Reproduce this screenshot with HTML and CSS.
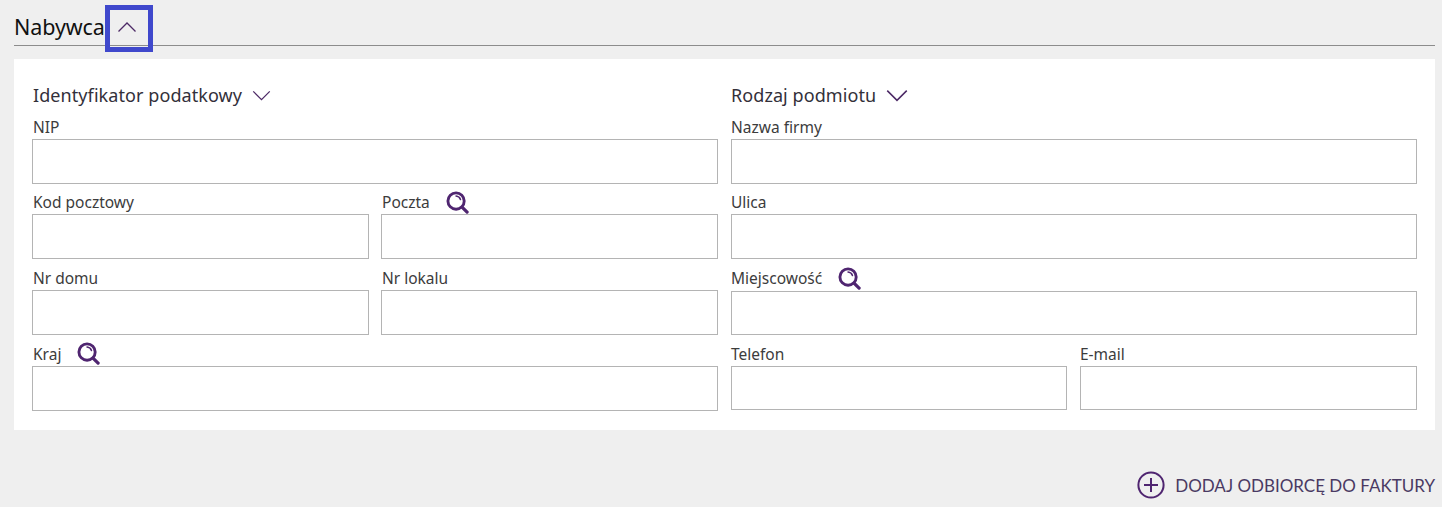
FILE: index.html
```html
<!DOCTYPE html>
<html lang="pl">
<head>
<meta charset="utf-8">
<title>Nabywca</title>
<link rel="stylesheet" href="styles.css">
</head>
<body>
<svg class="defs" width="0" height="0" aria-hidden="true">
  <symbol id="lens" viewBox="0 0 24 24">
    <circle cx="10.5" cy="10.5" r="8.5" fill="none" stroke="currentColor" stroke-width="3"/>
    <path d="M17 17l5 5" fill="none" stroke="currentColor" stroke-width="3.4" stroke-linecap="round"/>
    <path d="M10.5 5.2c2.2.2 3.9 1.6 4.6 3.6" fill="none" stroke="currentColor" stroke-width="1.6" stroke-linecap="round"/>
  </symbol>
  <symbol id="chev" viewBox="0 0 20 12">
    <path d="M1 1.5l9 9 9-9" fill="none" stroke="currentColor" stroke-width="1.4"/>
  </symbol>
</svg>
<main class="page">
  <header class="section-head">
    <h1 class="section-title">Nabywca</h1>
    <button class="toggle" type="button" aria-label="Zwiń">
      <svg class="toggle-icon" viewBox="0 0 20 12"><path d="M1.5 10.5l8.5-8.5 8.5 8.5" fill="none" stroke="currentColor" stroke-width="1.3"/></svg>
    </button>
  </header>
  <section class="card">
    <div class="column column-left">
      <div class="column-head"><span>Identyfikator podatkowy</span><svg class="chev"><use href="#chev"/></svg></div>
      <div class="fields fields-left">
        <div class="field span2"><div class="label">NIP</div><input class="input" type="text"></div>
        <div class="field"><div class="label">Kod pocztowy</div><input class="input" type="text"></div>
        <div class="field"><div class="label">Poczta<svg class="lens"><use href="#lens"/></svg></div><input class="input" type="text"></div>
        <div class="field"><div class="label">Nr domu</div><input class="input" type="text"></div>
        <div class="field"><div class="label">Nr lokalu</div><input class="input" type="text"></div>
        <div class="field span2"><div class="label">Kraj<svg class="lens"><use href="#lens"/></svg></div><input class="input" type="text"></div>
      </div>
    </div>
    <div class="column">
      <div class="column-head"><span>Rodzaj podmiotu</span><svg class="chev chev-wide"><use href="#chev"/></svg></div>
      <div class="fields fields-right">
        <div class="field span2"><div class="label">Nazwa firmy</div><input class="input" type="text"></div>
        <div class="field span2"><div class="label">Ulica</div><input class="input" type="text"></div>
        <div class="field span2 field-tall"><div class="label">Miejscowość<svg class="lens"><use href="#lens"/></svg></div><input class="input input-short" type="text"></div>
        <div class="field"><div class="label">Telefon</div><input class="input input-short" type="text"></div>
        <div class="field"><div class="label">E-mail</div><input class="input input-short" type="text"></div>
      </div>
    </div>
  </section>
  <footer class="actions">
    <a class="add-link" href="#">
      <svg class="add-icon" viewBox="0 0 28 28"><circle cx="14" cy="14" r="12.6" fill="none" stroke="currentColor" stroke-width="2"/><path d="M14 7v14M7 14h14" fill="none" stroke="currentColor" stroke-width="2"/></svg>
      <span>DODAJ ODBIORCĘ DO FAKTURY</span>
    </a>
  </footer>
</main>
</body>
</html>
```
FILE: styles.css
```css
* { box-sizing: border-box; }
html, body { margin: 0; height: 507px; overflow: hidden; }
body { background: #efefef; color: #3a3a3a; font-family: "Noto Sans", "Open Sans", sans-serif; }
.defs { position: absolute; }
.page { padding: 0 7px 0 14px; }
.section-head { display: flex; align-items: flex-end; height: 46px; border-bottom: 1px solid #8c8c8c; }
.section-title { margin: 0 0 4px; font-size: 21.5px; line-height: 28px; font-weight: 400; color: #111; letter-spacing: -.1px; }
.toggle { display: flex; align-items: center; justify-content: center; width: 48px; height: 47px; margin: 0 0 -7px 0; padding: 0; border: 5px solid #3f48cc; background: transparent; color: #4d2a66; }
.toggle-icon { width: 20px; height: 12px; margin: -4px 4px 0 0; }
.card { display: grid; grid-template-columns: 686px 686px; column-gap: 13px; height: 371px; margin-top: 13px; padding: 18px 18px 0; background: #fff; }
.column-head { display: flex; align-items: center; height: 38.9px; padding-bottom: 2px; font-size: 18px; letter-spacing: .08px; color: #33303a; }
.column-left .column-head, .column-left .label { padding-left: 1px; }
.chev { width: 19px; height: 11px; margin-left: 10px; color: #4d2a66; }
.chev-wide { width: 22px; height: 13px; }
.fields { display: grid; row-gap: 8px; }
.fields-left { grid-template-columns: 337px 337px; column-gap: 12px; }
.fields-right { grid-template-columns: 336px 337px; column-gap: 13px; }
.span2 { grid-column: span 2; }
.label { display: flex; align-items: center; height: 22.7px; padding-bottom: 1px; font-size: 15.5px; color: #3c3c3c; }
.field-tall .label { height: 24px; padding-bottom: 2px; }
.lens { width: 23px; height: 23px; margin-left: 16px; color: #4f2570; }
.input { display: block; width: 100%; height: 45px; border: 1px solid #b4b4b4; border-radius: 0; background: #fff; }
.input-short { height: 44px; }
.actions { display: flex; justify-content: flex-end; margin-top: 41px; }
.add-link { display: flex; align-items: center; gap: 10px; color: #4a3a63; text-decoration: none; font-family: Lato, sans-serif; font-size: 17px; }
.add-icon { width: 28px; height: 28px; color: #4f2570; }
```
